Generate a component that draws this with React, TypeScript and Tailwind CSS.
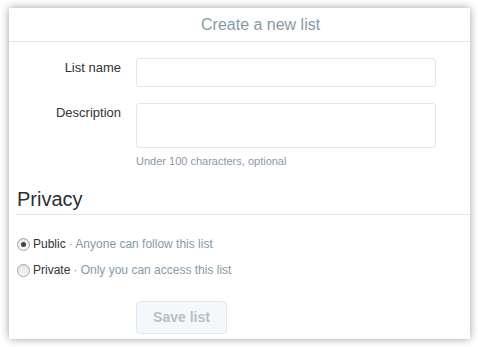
import React from "react";

function Radio({ checked }: { checked?: boolean }) {
  return (
    <span className="relative inline-flex h-[13px] w-[13px] shrink-0 items-center justify-center rounded-full border border-[#a5a5a5] bg-gradient-to-b from-[#e4e4e4] to-[#f9f9f9]">
      {checked && <span className="h-[5px] w-[5px] rounded-full bg-[#444]" />}
    </span>
  );
}

export default function App() {
  return (
    <div className="min-h-[347px] bg-white pt-[8px] pl-[9px] font-['Liberation_Sans',Arial,sans-serif]">
      <div className="flex h-[331px] w-[461px] flex-col bg-white shadow-[0_0_8px_rgba(0,0,0,0.38)]">
        {/* header */}
        <div className="flex h-[34px] items-center border-b border-[#e1e8ed] pl-[192px] text-[16px] text-[#8899a6]">
          Create a new list
        </div>

        {/* form */}
        <div className="flex flex-col pt-[16px]">
          <div className="flex">
            <label className="w-[112px] text-right text-[13px] leading-[20px] text-[#333]">List name</label>
            <input className="ml-[15px] h-[29px] w-[300px] rounded-[3px] border border-[#e1e8ed] bg-white outline-none" />
          </div>
          <div className="mt-[16px] flex">
            <label className="w-[112px] text-right text-[13px] leading-[20px] text-[#333]">Description</label>
            <div className="ml-[15px] flex flex-col">
              <textarea className="h-[45px] w-[300px] resize-none rounded-[3px] border border-[#e1e8ed] bg-white outline-none" />
              <span className="mt-[5px] text-[11px] leading-[16px] text-[#8899a6]">Under 100 characters, optional</span>
            </div>
          </div>
        </div>

        {/* privacy */}
        <h2 className="ml-[7px] mt-[18px] border-b border-[#e1e8ed] pb-[3px] pl-[1px] text-[20px] leading-[24px] text-[#292f33]">
          Privacy
        </h2>
        <div className="ml-[8px] mt-[19px] flex flex-col gap-[6px] text-[12px] leading-[20px]">
          <div className="flex items-center gap-[3px]">
            <Radio checked />
            <span className="text-[#333]">Public</span>
            <span className="text-[#8899a6]">· Anyone can follow this list</span>
          </div>
          <div className="flex items-center gap-[3px]">
            <Radio />
            <span className="text-[#333]">Private</span>
            <span className="text-[#8899a6]">· Only you can access this list</span>
          </div>
        </div>

        <div className="ml-[127px] mt-[21px]">
          <button className="h-[33px] w-[91px] rounded-[4px] border border-[#e1e8ed] bg-[#f5f8fa] text-[14px] font-bold text-[#b5c0c8]">
            Save list
          </button>
        </div>
      </div>
    </div>
  );
}
